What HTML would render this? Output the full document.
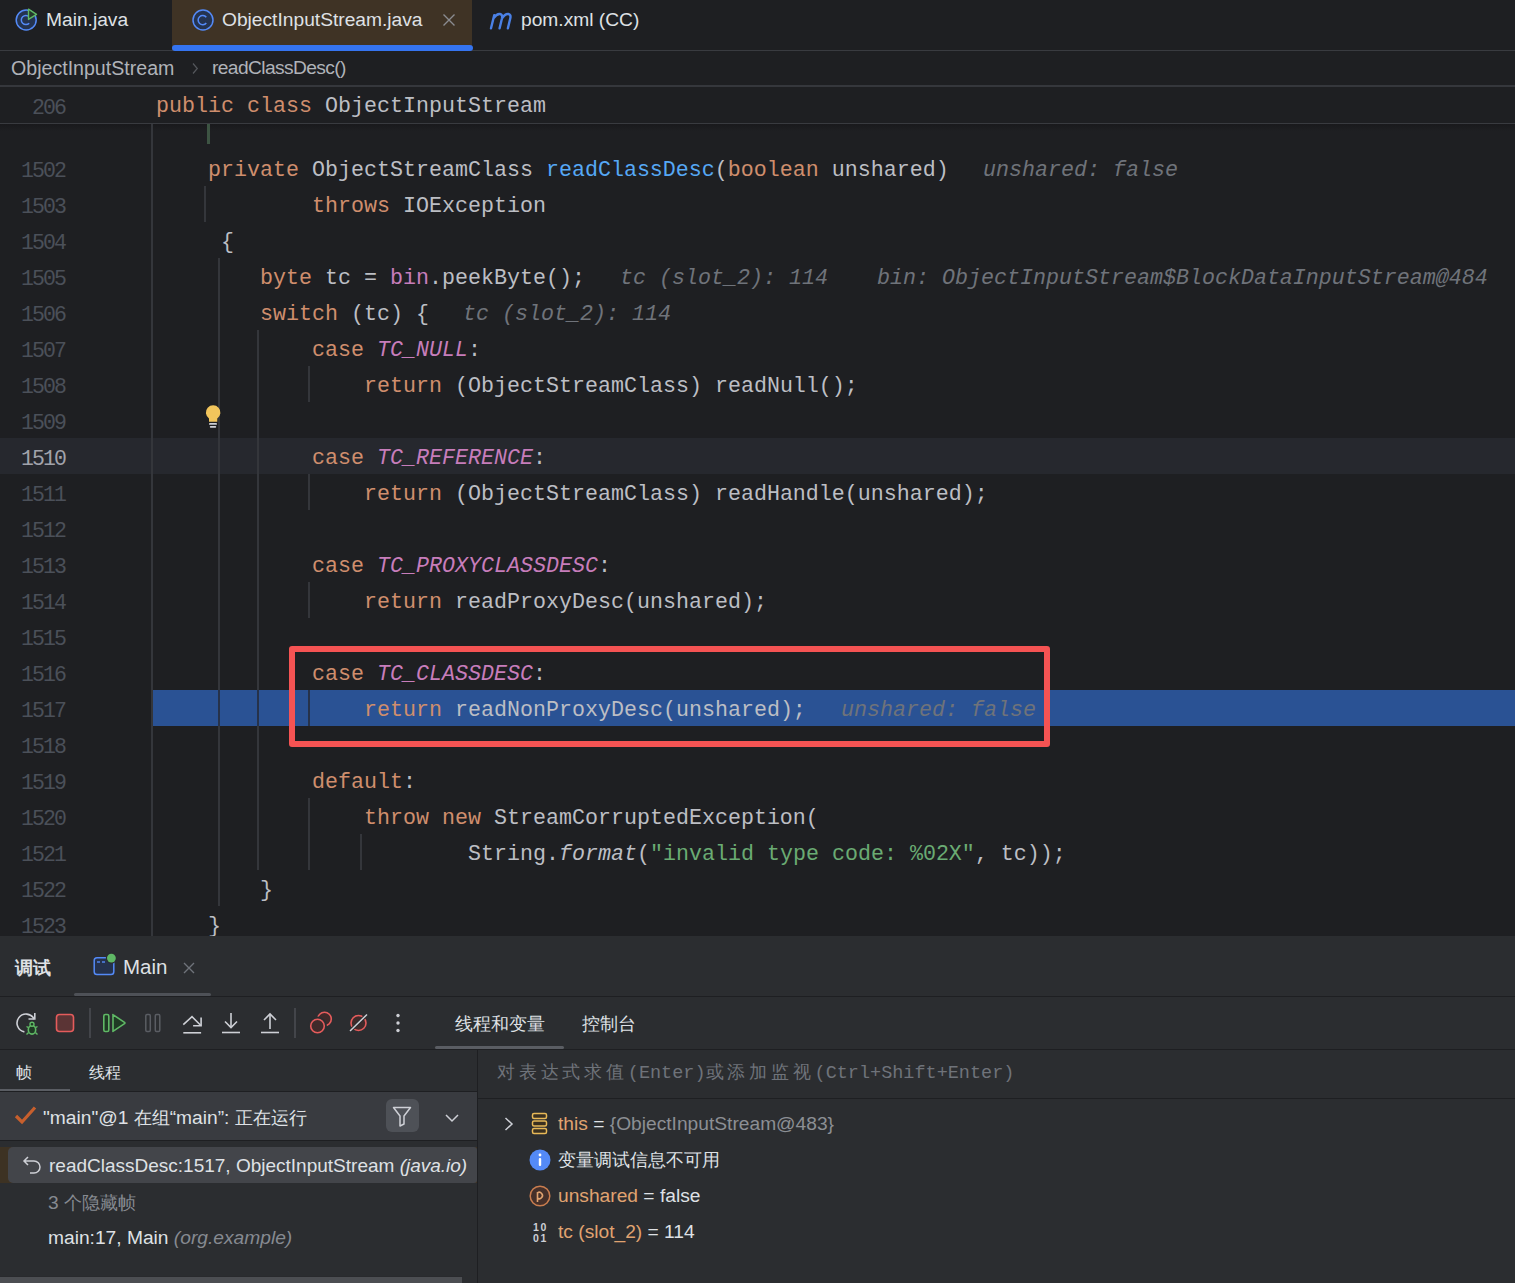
<!DOCTYPE html>
<html><head><meta charset="utf-8">
<style>
*{margin:0;padding:0;box-sizing:border-box}
html,body{width:1515px;height:1283px;overflow:hidden;background:#1E1F22}
body{position:relative;font-family:"Liberation Sans",sans-serif;color:#DFE1E5}
.a{position:absolute}
svg.a{overflow:visible}
.ui{font-family:"Liberation Sans",sans-serif;font-size:19.2px;white-space:pre}
.code{font-family:"Liberation Mono",monospace;font-size:21.67px;white-space:pre;color:#BCBEC4}
.ln{position:absolute;left:0;width:65px;text-align:right;font-family:"Liberation Mono",monospace;font-size:21.5px;letter-spacing:-1.9px;color:#4B5059;height:36px;line-height:36px}
.k{color:#CF8E6D}
.f{color:#56A8F5}
.c{color:#C77DBB;font-style:italic}
.fld{color:#C77DBB}
.s{color:#6AAB73}
.i{font-style:italic}
.h{color:#6F737A;font-style:italic}
.g{position:absolute;width:2px;background:#34363B}
</style></head><body>

<!-- ============ TAB BAR ============ -->
<div class="a" style="left:0;top:50px;width:1515px;height:1px;background:#393B40"></div>
<div class="a" style="left:172px;top:0;width:300px;height:50px;background:#3F3325"></div>
<div class="a" style="left:172px;top:45px;width:301px;height:6px;background:#3574F0;border-radius:3px"></div>

<svg class="a" style="left:14px;top:6px" width="26" height="28" viewBox="0 0 26 28">
  <circle cx="12.2" cy="14" r="10" fill="#243350" stroke="#548AF7" stroke-width="1.5"/>
  <path d="M15.2 10.8 A4.6 4.6 0 1 0 15.2 17.2" fill="none" stroke="#548AF7" stroke-width="1.5"/>
  <path d="M14.5 3.2 L22.5 8.3 L14.5 13.4 Z" fill="#25392B" stroke="#5FB865" stroke-width="1.4" stroke-linejoin="round"/>
</svg>
<div class="a ui" style="left:46px;top:8px;line-height:24px;color:#DFE1E5">Main.java</div>

<svg class="a" style="left:191px;top:8px" width="24" height="24" viewBox="0 0 24 24">
  <circle cx="12" cy="12" r="10" fill="#243350" stroke="#548AF7" stroke-width="1.5"/>
  <path d="M15.3 9.2 A4.6 4.6 0 1 0 15.3 15" fill="none" stroke="#548AF7" stroke-width="1.5"/>
</svg>
<div class="a ui" style="left:222px;top:8px;line-height:24px;color:#DFE1E5">ObjectInputStream.java</div>
<svg class="a" style="left:442px;top:13px" width="14" height="14" viewBox="0 0 14 14"><path d="M1.5 1.5 L12.5 12.5 M12.5 1.5 L1.5 12.5" stroke="#8A8C90" stroke-width="1.4"/></svg>

<svg class="a" style="left:488px;top:11px" width="26" height="20" viewBox="0 0 26 20">
  <path d="M3 17.3 L6.2 4.2 M5.7 7.2 Q8.6 2.6 12 3 Q14.8 3.6 14 7.3 L11.6 17.3 M14 7.4 Q17 2.6 20.3 3 Q23.2 3.6 22.3 7.3 L19.9 17.3" fill="none" stroke="#4A80E6" stroke-width="2.4" stroke-linecap="round" stroke-linejoin="round"/>
</svg>
<div class="a ui" style="left:521px;top:8px;line-height:24px;color:#DFE1E5">pom.xml (CC)</div>

<!-- ============ BREADCRUMBS ============ -->
<div class="a" style="left:0;top:85px;width:1515px;height:2px;background:#35373C"></div>
<div class="a ui" style="left:11px;top:56px;line-height:24px;color:#B0B3B9;font-size:19.6px">ObjectInputStream</div>
<svg class="a" style="left:190px;top:61px" width="10" height="14" viewBox="0 0 10 14"><path d="M3 2.5 L7.3 7.5 L3 12.5" fill="none" stroke="#54575C" stroke-width="1.2"/></svg>
<div class="a ui" style="left:212px;top:56px;line-height:24px;color:#B0B3B9;letter-spacing:-0.6px">readClassDesc()</div>

<!-- ============ STICKY LINE ============ -->
<div class="a" style="left:0;top:123px;width:1515px;height:1px;background:#393B40"></div>
<div class="ln" style="top:90px;width:65px">206</div>
<div class="a code" style="left:156px;top:89px;line-height:36px"><span class="k">public class</span> ObjectInputStream</div>

<!--EDITOR-->
<div class="a" style="left:0;top:124px;width:1515px;height:7px;background:linear-gradient(#19191C,rgba(30,31,34,0))"></div>
<div class="a" style="left:0;top:438px;width:1515px;height:36px;background:#26282E"></div>
<div class="a" style="left:153px;top:690px;width:1362px;height:36px;background:#2A5294"></div>
<div class="g" style="left:151px;top:124px;height:812px"></div>
<div class="g" style="left:204px;top:186px;height:36px"></div>
<div class="g" style="left:218px;top:258px;height:648px"></div>
<div class="g" style="left:257px;top:330px;height:540px"></div>
<div class="g" style="left:308px;top:366px;height:36px"></div>
<div class="g" style="left:308px;top:474px;height:36px"></div>
<div class="g" style="left:308px;top:582px;height:36px"></div>
<div class="g" style="left:308px;top:690px;height:36px"></div>
<div class="g" style="left:308px;top:798px;height:72px"></div>
<div class="g" style="left:360px;top:834px;height:36px"></div>
<div class="g" style="left:218px;top:690px;height:36px;background:#26324A"></div>
<div class="g" style="left:257px;top:690px;height:36px;background:#26324A"></div>
<div class="g" style="left:308px;top:690px;height:36px;background:#26324A"></div>
<div class="a" style="left:207px;top:124px;width:3px;height:20px;background:#3D5443"></div>
<div class="ln" style="top:153px">1502</div>
<div class="a code" style="left:208px;top:153px;line-height:36px"><span class="k">private</span> ObjectStreamClass <span class="f">readClassDesc</span>(<span class="k">boolean</span> unshared)</div>
<div class="a code h" style="left:983px;top:153px;line-height:36px">unshared: false</div>
<div class="ln" style="top:189px">1503</div>
<div class="a code" style="left:312px;top:189px;line-height:36px"><span class="k">throws</span> IOException</div>
<div class="ln" style="top:225px">1504</div>
<div class="a code" style="left:221px;top:225px;line-height:36px">{</div>
<div class="ln" style="top:261px">1505</div>
<div class="a code" style="left:260px;top:261px;line-height:36px"><span class="k">byte</span> tc = <span class="fld">bin</span>.peekByte();</div>
<div class="a code h" style="left:620px;top:261px;line-height:36px">tc (slot_2): 114</div>
<div class="a code h" style="left:877px;top:261px;line-height:36px">bin: ObjectInputStream$BlockDataInputStream@484</div>
<div class="ln" style="top:297px">1506</div>
<div class="a code" style="left:260px;top:297px;line-height:36px"><span class="k">switch</span> (tc) {</div>
<div class="a code h" style="left:463px;top:297px;line-height:36px">tc (slot_2): 114</div>
<div class="ln" style="top:333px">1507</div>
<div class="a code" style="left:312px;top:333px;line-height:36px"><span class="k">case</span> <span class="c">TC_NULL</span>:</div>
<div class="ln" style="top:369px">1508</div>
<div class="a code" style="left:364px;top:369px;line-height:36px"><span class="k">return</span> (ObjectStreamClass) readNull();</div>
<div class="ln" style="top:405px">1509</div>
<div class="ln" style="top:441px;color:#A1A3AB">1510</div>
<div class="a code" style="left:312px;top:441px;line-height:36px"><span class="k">case</span> <span class="c">TC_REFERENCE</span>:</div>
<div class="ln" style="top:477px">1511</div>
<div class="a code" style="left:364px;top:477px;line-height:36px"><span class="k">return</span> (ObjectStreamClass) readHandle(unshared);</div>
<div class="ln" style="top:513px">1512</div>
<div class="ln" style="top:549px">1513</div>
<div class="a code" style="left:312px;top:549px;line-height:36px"><span class="k">case</span> <span class="c">TC_PROXYCLASSDESC</span>:</div>
<div class="ln" style="top:585px">1514</div>
<div class="a code" style="left:364px;top:585px;line-height:36px"><span class="k">return</span> readProxyDesc(unshared);</div>
<div class="ln" style="top:621px">1515</div>
<div class="ln" style="top:657px">1516</div>
<div class="a code" style="left:312px;top:657px;line-height:36px"><span class="k">case</span> <span class="c">TC_CLASSDESC</span>:</div>
<div class="ln" style="top:693px">1517</div>
<div class="a code" style="left:364px;top:693px;line-height:36px"><span class="k">return</span> readNonProxyDesc(unshared);</div>
<div class="a code h" style="left:841px;top:693px;line-height:36px">unshared: false</div>
<div class="ln" style="top:729px">1518</div>
<div class="ln" style="top:765px">1519</div>
<div class="a code" style="left:312px;top:765px;line-height:36px"><span class="k">default</span>:</div>
<div class="ln" style="top:801px">1520</div>
<div class="a code" style="left:364px;top:801px;line-height:36px"><span class="k">throw new</span> StreamCorruptedException(</div>
<div class="ln" style="top:837px">1521</div>
<div class="a code" style="left:468px;top:837px;line-height:36px">String.<span class="i">format</span>(<span class="s">"invalid type code: %02X"</span>, tc));</div>
<div class="ln" style="top:873px">1522</div>
<div class="a code" style="left:260px;top:873px;line-height:36px">}</div>
<div class="ln" style="top:909px">1523</div>
<div class="a code" style="left:208px;top:909px;line-height:36px">}</div>
<svg class="a" style="left:200px;top:400px" width="26" height="30" viewBox="0 0 26 30">
<path d="M9 21.8 L9 18.5 A7.3 7.3 0 1 1 17.3 18.5 L17.3 21.8 Z" fill="#F2C55C"/>
<rect x="9" y="23" width="8" height="1.8" rx="0.9" fill="#CED0D6"/>
<rect x="9.8" y="26" width="6.4" height="1.7" rx="0.85" fill="#CED0D6"/>
</svg>
<div class="a" style="left:289px;top:646px;width:761px;height:101px;border:6px solid #F55353;border-radius:3px"></div>

<!--/EDITOR-->
<div class="a" style="left:0;top:936px;width:1515px;height:347px;background:#2B2D30"></div>
<!--DEBUG-->
<!-- header -->
<div class="a ui" style="left:15px;top:956px;line-height:24px;font-size:18px;font-weight:bold;color:#DFE1E5">调试</div>
<svg class="a" style="left:92px;top:952px" width="26" height="26" viewBox="0 0 26 26">
  <rect x="2.2" y="5.8" width="19.6" height="16.8" rx="2.8" fill="#25324D" stroke="#548AF7" stroke-width="1.5"/>
  <line x1="5" y1="10" x2="8" y2="10" stroke="#548AF7" stroke-width="1.4"/>
  <line x1="10" y1="10" x2="13" y2="10" stroke="#548AF7" stroke-width="1.4"/>
  <circle cx="19.4" cy="6.1" r="5.6" fill="#2B2D30"/><circle cx="19.4" cy="6.1" r="4.4" fill="#5FB865"/>
</svg>
<div class="a ui" style="left:123px;top:955px;line-height:24px;color:#DFE1E5;font-size:20.5px">Main</div>
<svg class="a" style="left:182px;top:962px" width="14" height="12" viewBox="0 0 14 12"><path d="M2 1 L12 11 M12 1 L2 11" stroke="#6F737A" stroke-width="1.4"/></svg>
<div class="a" style="left:74px;top:993px;width:137px;height:3px;background:#4E5157;border-radius:2px"></div>
<div class="a" style="left:0;top:996px;width:1515px;height:1px;background:#1E1F22"></div>

<!-- toolbar -->
<svg class="a" style="left:14px;top:1010px" width="28" height="28" viewBox="0 0 28 28">
  <path d="M20.1 9.05 A9 9 0 1 0 10.4 21.9" fill="none" stroke="#CED0D6" stroke-width="1.6"/>
  <path d="M20.8 3 L20.8 9 L14.5 9" fill="none" stroke="#CED0D6" stroke-width="1.6"/>
  <ellipse cx="18" cy="19.8" rx="3.7" ry="4.3" fill="#1F3A24" stroke="#5FB865" stroke-width="1.6"/>
  <circle cx="18" cy="14.3" r="2" fill="#1F3A24" stroke="#5FB865" stroke-width="1.4"/>
  <path d="M12.5 16.5 L14.6 17.6 M23.5 16.5 L21.4 17.6 M12.5 24.6 L14.6 22.6 M23.5 24.6 L21.4 22.6" stroke="#5FB865" stroke-width="1.4"/>
</svg>
<svg class="a" style="left:54px;top:1012px" width="22" height="22" viewBox="0 0 22 22"><rect x="2.5" y="2.5" width="17" height="17" rx="3" fill="#5B3435" stroke="#E55C5C" stroke-width="1.6"/></svg>
<div class="a" style="left:89px;top:1008px;width:2px;height:30px;background:#43454A"></div>
<svg class="a" style="left:101px;top:1012px" width="26" height="22" viewBox="0 0 26 22">
  <rect x="2.8" y="2.5" width="5" height="17" rx="1.5" fill="#1F3A24" stroke="#5FB865" stroke-width="1.6"/>
  <path d="M12 2.8 Q11.6 2.4 12.3 2.9 L23.5 10.3 Q24.3 11 23.5 11.7 L12.3 19.1 Q11.6 19.6 12 19.2 Z" fill="#1F3A24" stroke="#5FB865" stroke-width="1.6" stroke-linejoin="round"/>
</svg>
<svg class="a" style="left:143px;top:1012px" width="20" height="22" viewBox="0 0 20 22">
  <rect x="2.8" y="2.5" width="4.5" height="17" rx="1.2" fill="none" stroke="#5A5D63" stroke-width="1.5"/>
  <rect x="12.3" y="2.5" width="4.5" height="17" rx="1.2" fill="none" stroke="#5A5D63" stroke-width="1.5"/>
</svg>
<svg class="a" style="left:180px;top:1012px" width="24" height="24" viewBox="0 0 24 24">
  <path d="M3.3 12.7 L12 4.7 L20.6 13.3" fill="none" stroke="#CED0D6" stroke-width="1.6"/>
  <path d="M21.1 5.6 L21.1 13.8 L13.1 13.8" fill="none" stroke="#CED0D6" stroke-width="1.6"/>
  <line x1="3.3" y1="20.8" x2="21.1" y2="20.8" stroke="#CED0D6" stroke-width="1.6"/>
</svg>
<svg class="a" style="left:219px;top:1011px" width="24" height="24" viewBox="0 0 24 24">
  <line x1="12" y1="2" x2="12" y2="16" stroke="#CED0D6" stroke-width="1.6"/>
  <path d="M6 10.5 L12 16.5 L18 10.5" fill="none" stroke="#CED0D6" stroke-width="1.6"/>
  <line x1="3" y1="21.5" x2="21" y2="21.5" stroke="#CED0D6" stroke-width="1.6"/>
</svg>
<svg class="a" style="left:258px;top:1011px" width="24" height="24" viewBox="0 0 24 24">
  <line x1="12" y1="3" x2="12" y2="18" stroke="#CED0D6" stroke-width="1.6"/>
  <path d="M6 9 L12 3 L18 9" fill="none" stroke="#CED0D6" stroke-width="1.6"/>
  <line x1="3" y1="21.5" x2="21" y2="21.5" stroke="#CED0D6" stroke-width="1.6"/>
</svg>
<div class="a" style="left:294px;top:1008px;width:2px;height:30px;background:#43454A"></div>
<svg class="a" style="left:308px;top:1010px" width="26" height="26" viewBox="0 0 26 26">
  <circle cx="16.5" cy="9" r="6.8" fill="#402A2A" stroke="#E55C5C" stroke-width="1.6"/>
  <circle cx="9.5" cy="16" r="7.8" fill="#402A2A" stroke="#2B2D30" stroke-width="3.2"/>
  <circle cx="9.5" cy="16" r="6.8" fill="#402A2A" stroke="#E55C5C" stroke-width="1.6"/>
</svg>
<svg class="a" style="left:347px;top:1011px" width="24" height="24" viewBox="0 0 24 24">
  <circle cx="11.5" cy="12" r="7.5" fill="#402A2A" stroke="#E55C5C" stroke-width="1.6"/>
  <line x1="3" y1="20" x2="20" y2="3.5" stroke="#2B2D30" stroke-width="3.5"/>
  <line x1="3" y1="20" x2="20" y2="3.5" stroke="#CED0D6" stroke-width="1.5"/>
</svg>
<svg class="a" style="left:392px;top:1011px" width="12" height="24" viewBox="0 0 12 24">
  <circle cx="6" cy="4.5" r="1.7" fill="#CED0D6"/><circle cx="6" cy="12" r="1.7" fill="#CED0D6"/><circle cx="6" cy="19.5" r="1.7" fill="#CED0D6"/>
</svg>
<div class="a ui" style="left:455px;top:1012px;line-height:24px;font-size:18px;color:#DFE1E5">线程和变量</div>
<div class="a ui" style="left:582px;top:1012px;line-height:24px;font-size:18px;color:#DFE1E5">控制台</div>
<div class="a" style="left:435px;top:1046px;width:129px;height:3px;background:#5A5D63;border-radius:2px"></div>
<div class="a" style="left:0;top:1049px;width:1515px;height:1px;background:#1E1F22"></div>

<!-- frames panel -->
<div class="a ui" style="left:16px;top:1061px;line-height:24px;font-size:16px;color:#DFE1E5">帧</div>
<div class="a ui" style="left:89px;top:1061px;line-height:24px;font-size:16px;color:#DFE1E5">线程</div>
<div class="a" style="left:0;top:1089px;width:70px;height:3px;background:#5A5D63"></div>
<div class="a" style="left:0;top:1091px;width:477px;height:1px;background:#1E1F22"></div>
<div class="a" style="left:0;top:1092px;width:477px;height:48px;background:#393B40"></div>
<div class="a" style="left:0;top:1140px;width:477px;height:1px;background:#1E1F22"></div>
<svg class="a" style="left:13px;top:1104px" width="26" height="22" viewBox="0 0 26 22"><path d="M3 12 L9 18 L22 3.5" fill="none" stroke="#C75F2D" stroke-width="3.2"/></svg>
<div class="a ui" style="left:43px;top:1106px;line-height:24px;color:#DFE1E5">"main"@1 <span style="font-size:18px">在组</span>“main”: <span style="font-size:18px">正在运行</span></div>
<div class="a" style="left:386px;top:1099px;width:33px;height:33px;background:#4E5157;border-radius:6px"></div>
<svg class="a" style="left:391px;top:1105px" width="22" height="22" viewBox="0 0 22 22"><path d="M2.5 2.5 L19.5 2.5 L13 11 L13 19 L9 21 L9 11 Z" fill="none" stroke="#CED0D6" stroke-width="1.5" stroke-linejoin="round"/></svg>
<svg class="a" style="left:444px;top:1112px" width="16" height="12" viewBox="0 0 16 12"><path d="M2 3 L8 9 L14 3" fill="none" stroke="#CED0D6" stroke-width="1.5"/></svg>

<div class="a" style="left:0;top:1147px;width:477px;height:36px;background:#3D3223"></div>
<div class="a" style="left:8px;top:1147px;width:469px;height:36px;background:#43454A;border-radius:5px 3px 3px 5px"></div>
<svg class="a" style="left:21px;top:1154px" width="22" height="22" viewBox="0 0 22 22"><path d="M7 3 L3 7 L7 11 M3 7 L13 7 A6 6 0 0 1 13 19 L9 19" fill="none" stroke="#CED0D6" stroke-width="1.5"/></svg>
<div class="a ui" style="left:49px;top:1154px;line-height:24px;color:#DFE1E5;font-size:19px">readClassDesc:1517, ObjectInputStream <span class="i" style="color:#DFE1E5">(java.io)</span></div>
<div class="a ui" style="left:48px;top:1191px;line-height:24px;color:#868A91">3 <span style="font-size:18px">个隐藏帧</span></div>
<div class="a ui" style="left:48px;top:1226px;line-height:24px;color:#DFE1E5">main:17, Main <span class="i" style="color:#868A91">(org.example)</span></div>
<div class="a" style="left:0;top:1276px;width:463px;height:1px;background:#292A2D"></div><div class="a" style="left:0;top:1277px;width:462px;height:6px;background:#4C4E52"></div>
<div class="a" style="left:477px;top:1050px;width:1px;height:233px;background:#1E1F22"></div>

<!-- variables panel -->
<div class="a code" style="left:497px;top:1061px;line-height:24px;font-size:18.5px;color:#6F737A"><span style="font-size:18px;letter-spacing:3.8px">对表达式求值</span>(Enter)<span style="font-size:18px;letter-spacing:3.8px">或添加监视</span>(Ctrl+Shift+Enter)</div>
<div class="a" style="left:478px;top:1098px;width:1037px;height:1px;background:#1E1F22"></div>

<svg class="a" style="left:502px;top:1116px" width="14" height="16" viewBox="0 0 14 16"><path d="M3.5 2 L10 8 L3.5 14" fill="none" stroke="#CED0D6" stroke-width="1.5"/></svg>
<svg class="a" style="left:529px;top:1111px" width="22" height="26" viewBox="0 0 22 26">
  <rect x="3.5" y="2.5" width="14" height="5" rx="1.5" fill="#3A3020" stroke="#E8B957" stroke-width="1.5"/>
  <rect x="3.5" y="10" width="14" height="5" rx="1.5" fill="#3A3020" stroke="#E8B957" stroke-width="1.5"/>
  <rect x="3.5" y="17.5" width="14" height="5" rx="1.5" fill="#3A3020" stroke="#E8B957" stroke-width="1.5"/>
</svg>
<div class="a ui" style="left:558px;top:1112px;line-height:24px;color:#DFE1E5"><span style="color:#E0A370">this</span> = <span style="color:#8C8F94">{ObjectInputStream@483}</span></div>

<svg class="a" style="left:528px;top:1148px" width="24" height="24" viewBox="0 0 24 24"><circle cx="12" cy="12" r="10.5" fill="#548AF7"/><circle cx="12" cy="7" r="1.4" fill="#fff"/><rect x="10.8" y="10" width="2.4" height="8" rx="1" fill="#fff"/></svg>
<div class="a ui" style="left:558px;top:1148px;line-height:24px;font-size:18px;color:#DFE1E5">变量调试信息不可用</div>

<svg class="a" style="left:528px;top:1184px" width="24" height="24" viewBox="0 0 24 24"><circle cx="12" cy="12" r="9.8" fill="#45302A" stroke="#C97D4F" stroke-width="1.5"/><path d="M9.5 18 L9.5 8 M9.5 8.8 A3.2 3.2 0 1 1 9.5 14.2" fill="none" stroke="#E0A370" stroke-width="1.6"/></svg>
<div class="a ui" style="left:558px;top:1184px;line-height:24px;color:#DFE1E5"><span style="color:#E0A370">unshared</span> = false</div>

<svg class="a" style="left:530px;top:1220px" width="20" height="24" viewBox="0 0 20 24">
  <text x="10.5" y="10.5" text-anchor="middle" font-family="Liberation Sans" font-weight="bold" font-size="10.5" fill="#CED0D6" letter-spacing="1.6">10</text>
  <text x="10.5" y="21.5" text-anchor="middle" font-family="Liberation Sans" font-weight="bold" font-size="10.5" fill="#CED0D6" letter-spacing="1.6">01</text>
</svg>
<div class="a ui" style="left:558px;top:1220px;line-height:24px;color:#DFE1E5"><span style="color:#E0A370">tc (slot_2)</span> = 114</div>

<!--/DEBUG-->
</body></html>
